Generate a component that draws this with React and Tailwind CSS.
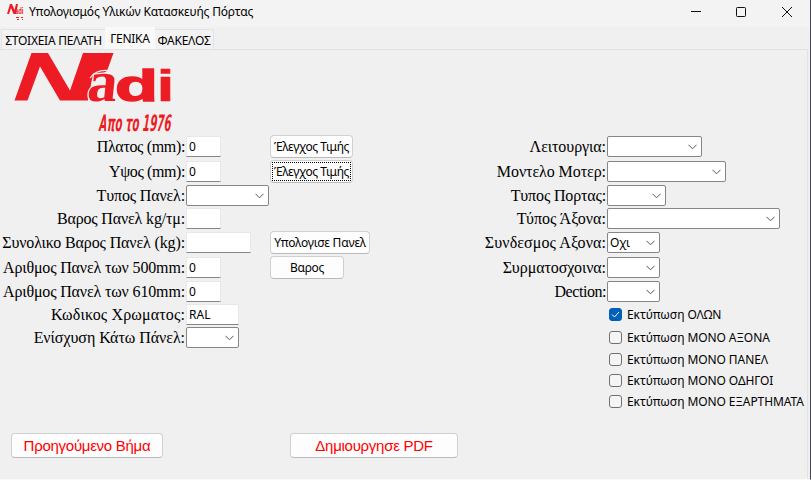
import React from "react";

const sans = "font-['Noto_Sans','Open_Sans',sans-serif]";
const serif = "font-['Liberation_Serif',serif]";

function Label({ w, text, track }) {
  return (
    <div className={`${w} ${serif} flex h-[21px] shrink-0 justify-end whitespace-nowrap text-base leading-[21px] ${track}`}>
      {text}
    </div>
  );
}

function Entry({ w, value }) {
  return (
    <div className={`${w} ${sans} h-[21px] shrink-0 border border-[#e8e8e8] border-b-[#868686] bg-white pl-[2px] text-xs leading-[19px]`}>
      {value}
    </div>
  );
}

function Combo({ w, value }) {
  return (
    <div className={`${w} ${sans} flex h-[21px] shrink-0 items-center justify-between rounded-[2px] border border-[#868686] bg-white pl-[2px] pr-1 text-xs leading-[19px] tracking-[-0.2px]`}>
      <span>{value}</span>
      <svg width="9" height="6" viewBox="0 0 9 6" fill="none" stroke="#555" strokeWidth="1">
        <path d="M0.5 0.8 4.5 4.8 8.5 0.8" />
      </svg>
    </div>
  );
}

function Button({ w, text, track, focused }) {
  return (
    <div className={`${w} ${sans} ${track} -mt-px flex h-[23px] shrink-0 items-center justify-center whitespace-nowrap rounded-[4px] border border-[#d0d0d0] border-b-[#bababa] bg-[#fdfdfd] text-xs ${focused ? "p-px" : ""}`}>
      {focused ? (
        <span className="flex h-full w-full items-center justify-center border border-dotted border-black">{text}</span>
      ) : (
        text
      )}
    </div>
  );
}

function ActionButton({ w, text, track }) {
  return (
    <div className={`${w} ${track} flex h-[25px] items-center justify-center whitespace-nowrap rounded-[4px] border border-[#d0d0d0] border-b-[#bababa] bg-[#fdfdfd] font-['Liberation_Sans',sans-serif] text-[15px] text-[#ff0000]`}>
      {text}
    </div>
  );
}

const rows = [
  { h: "h-[25px]", l: "Πλατος (mm):", lt: "tracking-[-0.35px]", c: <Entry w="w-[35px]" value="0" />, b: <Button w="w-[83px]" track="tracking-[-0.42px]" text="Έλεγχος Τιμής" />, r: "Λειτουργια:", rt: "tracking-[-0.07px]", rc: <Combo w="w-[95px]" /> },
  { h: "h-[24px]", l: "Υψος (mm):", lt: "tracking-[-0.4px]", c: <Entry w="w-[35px]" value="0" />, b: <Button w="w-[83px]" track="tracking-[-0.42px]" text="Έλεγχος Τιμής" focused />, r: "Μοντελο Μοτερ:", rt: "tracking-[-0.07px]", rc: <Combo w="w-[119px]" /> },
  { h: "h-[23px]", l: "Τυπος Πανελ:", lt: "tracking-[-0.15px]", c: <Combo w="w-[83px]" />, r: "Τυπος Πορτας:", rt: "tracking-[-0.15px]", rc: <Combo w="w-[59px]" /> },
  { h: "h-[24px]", l: "Βαρος Πανελ kg/τμ:", lt: "tracking-[-0.16px]", c: <Entry w="w-[35px]" />, r: "Τύπος Άξονα:", rt: "tracking-[0.04px]", rc: <Combo w="w-[173px]" /> },
  { h: "h-[25px]", l: "Συνολικο Βαρος Πανελ (kg):", lt: "tracking-[-0.13px]", c: <Entry w="w-[65px]" />, b: <Button w="w-[100px]" track="tracking-[-0.2px]" text="Υπολογισε Πανελ" />, r: "Συνδεσμος Αξονα:", rt: "tracking-[0.1px]", rc: <Combo w="w-[53px]" value="Οχι" /> },
  { h: "h-[24px]", l: "Αριθμος Πανελ των 500mm:", lt: "tracking-[-0.15px]", c: <Entry w="w-[35px]" value="0" />, b: <Button w="w-[74px]" track="tracking-[-0.3px]" text="Βαρος" />, r: "Συρματοσχοινα:", rt: "tracking-[-0.07px]", rc: <Combo w="w-[53px]" /> },
  { h: "h-[23px]", l: "Αριθμος Πανελ των 610mm:", lt: "tracking-[-0.15px]", c: <Entry w="w-[35px]" value="0" />, r: "Dection:", rt: "tracking-[-0.45px]", rc: <Combo w="w-[53px]" /> },
];

const checks = [
  { h: "h-[23px]", text: "Εκτύπωση ΟΛΩΝ", on: true },
  { h: "h-[22px]", text: "Εκτύπωση ΜΟΝΟ ΑΞΟΝΑ" },
  { h: "h-[21px]", text: "Εκτύπωση ΜΟΝΟ ΠΑΝΕΛ" },
  { h: "h-[21px]", text: "Εκτύπωση ΜΟΝΟ ΟΔΗΓΟΙ" },
  { h: "h-[21px]", text: "Εκτύπωση ΜΟΝΟ ΕΞΑΡΤΗΜΑΤΑ" },
];

function Logo() {
  return (
    <svg width="170" height="86" viewBox="0 0 170 86" className="ml-[14px] block shrink-0 overflow-visible" fill="#ed1c24">
      <path d="M17.500 3H34L56 40.500 69 3H99.500L93 21 78 29 74 50.500H46L26 16.500 13.500 50.500H0.500Z" />
      <text transform="translate(72 50.500) skewX(-6)" fontFamily="Liberation Serif" fontWeight="700" fontSize="58" textLength="30" lengthAdjust="spacingAndGlyphs" stroke="#f0f0f0" strokeWidth="2.400" paintOrder="stroke">a</text>
      <path d="M76 28Q83 18 98 21" fill="none" stroke="#f0f0f0" strokeWidth="1.300" />
      <text x="101" y="50.500" fontFamily="Liberation Sans" fontWeight="700" fontSize="44" textLength="43" lengthAdjust="spacingAndGlyphs" stroke="#ed1c24" strokeWidth="1.400">d</text>
      <text x="142.500" y="50.500" fontFamily="Liberation Sans" fontWeight="700" fontSize="44" textLength="18" lengthAdjust="spacingAndGlyphs" stroke="#ed1c24" strokeWidth="0.500">i</text>
      <text transform="translate(85 80.500) skewX(-4)" fontFamily="DejaVu Sans" fontWeight="700" fontStyle="italic" fontSize="22.500" textLength="72" lengthAdjust="spacingAndGlyphs">Απο το 1976</text>
    </svg>
  );
}

export default function App() {
  return (
    <div className={`${sans} flex h-[480px] w-[811px] flex-col overflow-hidden border-b border-r border-b-[#fafafa] border-r-[#45454d] bg-[#f0f0f0] text-xs text-black`}>
      <div className="flex h-[27px] shrink-0 items-center bg-[#f3f3f3] pb-[3px]">
        <svg width="18" height="20" viewBox="0 0 18 20" className="ml-[6px] shrink-0 overflow-visible" fill="#ed1c24">
          <path d="M1 12 4 2H6L8.500 8 10 2H12L10 12H7.500L5 6 3 12Z" />
          <text x="9" y="12" fontFamily="Liberation Sans" fontWeight="700" fontSize="9.500" textLength="8.500" lengthAdjust="spacingAndGlyphs">adi</text>
          <path d="M10 15h3v1h-3zM11 17h2v1h-2zM15 15h2v1h-2zM16 17h1v1h-1z" />
        </svg>
        <span className="ml-[5px] tracking-[-0.17px]">Υπολογισμός Υλικών Κατασκευής Πόρτας</span>
        <svg width="120" height="22" viewBox="0 0 120 22" className="ml-auto" fill="none" stroke="#111">
          <path d="M1 10.500H11M92 6l10 10M102 6l-10 10" />
          <rect x="46.500" y="6.500" width="9" height="9" rx="0.800" />
        </svg>
      </div>
      <div className="flex h-[22px] shrink-0 items-end tracking-[-0.26px]">
        <div className="ml-px flex h-5 w-[104px] items-center justify-center border-l border-t border-[#e3e3e3] bg-[#f2f2f2] pt-[3px]">ΣΤΟΙΧΕΙΑ ΠΕΛΑΤΗ</div>
        <div className="-mb-px flex h-[23px] w-[50px] items-center justify-center bg-[#f9f9f9]">ΓΕΝΙΚΑ</div>
        <div className="flex h-5 w-[59px] items-center justify-center border-r border-t border-[#e3e3e3] bg-[#f2f2f2] pt-[3px]">ΦΑΚΕΛΟΣ</div>
      </div>
      <div className="mr-[2px] flex grow flex-col border-r border-t border-[#e3e3e3]">
        <Logo />
        <div className="flex flex-col">
          {rows.map((r) => (
            <div key={r.l} className={`${r.h} flex shrink-0 items-start`}>
              <Label w="w-[185px]" text={r.l} track={r.lt} />
              <div className="ml-px w-[84px] shrink-0">{r.c}</div>
              <div className="w-[180px] shrink-0">{r.b}</div>
              <Label w="w-[156px]" text={r.r} track={r.rt} />
              <div className="ml-px">{r.rc}</div>
            </div>
          ))}
        </div>
        <div className="flex">
          <div className="w-[609px] shrink-0">
            <div className="flex h-[23px]">
              <Label w="w-[185px]" text="Κωδικος Χρωματος:" track="tracking-[0.14px]" />
              <div className="ml-px"><Entry w="w-[53px]" value="RAL" /></div>
            </div>
            <div className="flex h-[23px]">
              <Label w="w-[185px]" text="Ενίσχυση Κάτω Πάνελ:" track="tracking-[-0.05px]" />
              <div className="ml-px"><Combo w="w-[53px]" /></div>
            </div>
          </div>
          <div className="pt-1">
            {checks.map((c) => (
              <div key={c.text} className={`${c.h} flex items-start gap-[5px] whitespace-nowrap leading-[13px] tracking-[-0.08px]`}>
                <span className={`flex h-[13px] w-[13px] shrink-0 items-center justify-center rounded-[3px] border ${c.on ? "border-[#005fb8] bg-[#005fb8]" : "border-[#707070] bg-[#f5f5f5]"}`}>
                  {c.on && (
                    <svg width="9" height="7" viewBox="0 0 9 7" fill="none" stroke="#fff" strokeWidth="1">
                      <path d="M1 3.500 3.500 6 8 1" />
                    </svg>
                  )}
                </span>
                {c.text}
              </div>
            ))}
          </div>
        </div>
        <div className="mt-[17px] flex gap-[127px] pl-[11px]">
          <ActionButton w="w-[152px]" track="tracking-[-0.27px]" text="Προηγούμενο Βήμα" />
          <ActionButton w="w-[168px]" track="tracking-[-0.27px]" text="Δημιουργησε PDF" />
        </div>
      </div>
    </div>
  );
}
